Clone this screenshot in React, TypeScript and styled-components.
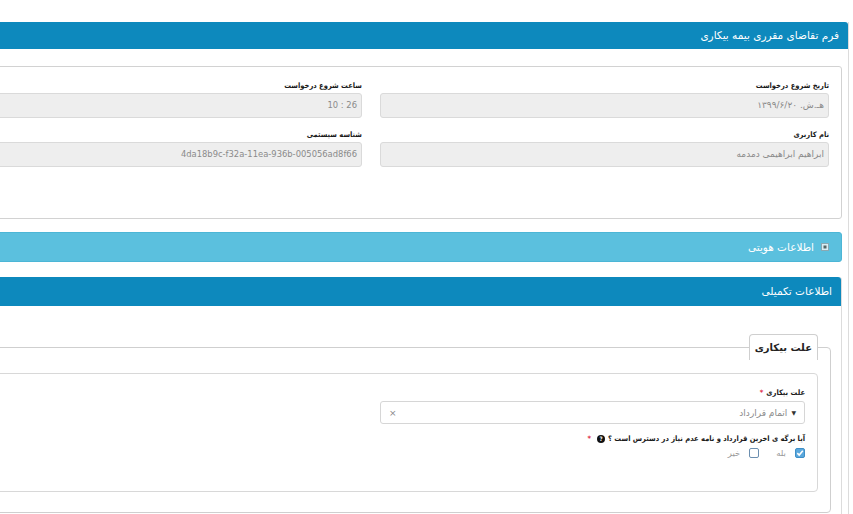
import React from "react";
import styled, { createGlobalStyle } from "styled-components";

const Global = createGlobalStyle`
  html, body { margin: 0; padding: 0; background: #fff; overflow: hidden; }
  body { font-family: "DejaVu Sans", "Noto Sans", sans-serif; color: #333; }
  * { box-sizing: border-box; }
`;

const Page = styled.div`
  direction: rtl;
  width: 956px;
  margin-left: -107px;
  padding-top: 22px;
`;

const MainPanel = styled.section`
  border: 1px solid #dcdcdc;
  border-top: none;
  min-height: 520px;
`;

const Heading = styled.div<{ $h: number }>`
  height: ${(p) => p.$h}px;
  line-height: ${(p) => p.$h}px;
  background: #0d89bd;
  color: #fff;
  font-size: 10.5px;
  padding: 0 9px;
  border-radius: 3px 3px 0 0;
`;

const PanelBody = styled.div`
  padding: 17px 6px 0;
`;

const Well = styled.div`
  border: 1px solid #d2d2d2;
  border-radius: 3px;
  padding: 12px 12px 51px;
  display: grid;
  grid-template-columns: 1fr 1fr;
  column-gap: 18px;
  row-gap: 10px;
`;

const Field = styled.div`
  display: flex;
  flex-direction: column;
`;

const Label = styled.label`
  display: block;
  height: 14px;
  line-height: 14px;
  font-family: "DejaVu Sans Condensed", "DejaVu Sans", sans-serif;
  font-size: 7.5px;
  font-weight: bold;
  color: #1a1a1a;
  white-space: nowrap;
`;

const Req = styled.span`
  color: #e0304a;
  margin-right: 3px;
`;

const ReadInput = styled.div<{ $ltr?: boolean }>`
  height: 25px;
  line-height: 23px;
  background: #eeeeee;
  border: 1px solid #dadada;
  border-radius: 3px;
  padding: 0 4px;
  font-size: ${(p) => (p.$ltr ? "8.4px" : "9px")};
  color: #8a8a8a;
  white-space: nowrap;
  overflow: hidden;
  direction: ${(p) => (p.$ltr ? "ltr" : "rtl")};
  text-align: right;
`;

const InfoBar = styled.div`
  margin-top: 13px;
  height: 30px;
  background: #5bc0de;
  border: 1px solid #4cb6d6;
  border-radius: 3px;
  display: flex;
  align-items: center;
  gap: 7px;
  padding: 0 12px;
  color: #fff;
  font-size: 10.5px;
`;

const SubPanel = styled.section`
  margin-top: 15px;
  border: 1px solid #dcdcdc;
  border-radius: 3px;
  border-top: none;
`;

const SubBody = styled.div`
  padding: 28px 10px 0;
  min-height: 230px;
`;

const FieldSet = styled.fieldset`
  margin: 0;
  padding: 0 12px 20px;
  border: 1px solid #cfcfcf;
  border-radius: 4px;
  min-width: 0;
`;

const Legend = styled.legend`
  height: 26px;
  line-height: 26px;
  padding: 0 5px;
  margin: 0;
  text-align: right;
  border: 1px solid #cfcfcf;
  border-bottom: none;
  border-radius: 4px 4px 0 0;
  background: #fff;
  font-size: 10px;
  font-weight: bold;
  color: #222;
  white-space: nowrap;
`;

const InnerBox = styled.div`
  margin-top: 13px;
  border: 1px solid #d8d8d8;
  border-radius: 4px;
  padding: 12px 12px 31px;
  display: grid;
  grid-template-columns: 1fr 1fr;
  column-gap: 18px;
`;

const SelectBox = styled.div`
  margin-top: 1px;
  height: 23px;
  border: 1px solid #d6d6d6;
  border-radius: 3px;
  display: flex;
  align-items: center;
  justify-content: space-between;
  padding: 0 8px 0 8px;
  font-size: 9px;
  color: #8a8a8a;
`;

const SelectValue = styled.span`
  display: flex;
  align-items: center;
  gap: 4px;
`;

const Caret = styled.span`
  color: #333;
  font-size: 6px;
`;

const Clear = styled.span`
  color: #888;
  font-size: 9px;
`;

const Question = styled.div`
  margin-top: 8px;
  height: 14px;
  line-height: 14px;
  font-family: "DejaVu Sans Condensed", "DejaVu Sans", sans-serif;
  font-size: 7.5px;
  font-weight: bold;
  color: #1a1a1a;
  white-space: nowrap;
  display: flex;
  align-items: center;
  gap: 3px;
`;

const HelpDot = styled.span`
  display: inline-flex;
  align-items: center;
  justify-content: center;
  width: 8px;
  height: 8px;
  border-radius: 50%;
  background: #111;
  color: #fff;
  font-size: 6px;
  line-height: 8px;
`;

const Choices = styled.div`
  display: flex;
  align-items: center;
  height: 14px;
  gap: 17px;
`;

const Choice = styled.label`
  display: flex;
  align-items: center;
  gap: 9px;
  font-size: 8.5px;
  color: #999;
`;

const Box = styled.span<{ $on?: boolean }>`
  display: inline-flex;
  width: 10px;
  height: 10px;
  border-radius: 2px;
  border: 1px solid ${(p) => (p.$on ? "#3f8fc7" : "#6c8fb0")};
  background: ${(p) => (p.$on ? "#5aa7dc" : "#fff")};
  align-items: center;
  justify-content: center;
`;

const PlusIcon = () => (
  <svg width="8" height="8" viewBox="0 0 8 8">
    <rect x="0.5" y="0.5" width="7" height="7" fill="#d9eef5" stroke="#8aa9b3" />
    <rect x="2.5" y="2.5" width="3" height="3" fill="#566" />
  </svg>
);

const Check = () => (
  <svg width="8" height="8" viewBox="0 0 8 8">
    <path d="M1.3 4.2 L3.2 6 L6.8 1.8" fill="none" stroke="#fff" strokeWidth="1.6" />
  </svg>
);

export default function App() {
  return (
    <>
      <Global />
      <Page>
        <MainPanel>
          <Heading $h={27}>فرم تقاضای مقرری بیمه بیکاری</Heading>
          <PanelBody>
            <Well>
              <Field>
                <Label>تاریخ شروع درخواست</Label>
                <ReadInput>هـ.ش. ۱۳۹۹/۶/۲۰</ReadInput>
              </Field>
              <Field>
                <Label>ساعت شروع درخواست</Label>
                <ReadInput $ltr>10 : 26</ReadInput>
              </Field>
              <Field>
                <Label>نام کاربری</Label>
                <ReadInput>ابراهیم ابراهیمی دمدمه</ReadInput>
              </Field>
              <Field>
                <Label>شناسه سیستمی</Label>
                <ReadInput $ltr>4da18b9c-f32a-11ea-936b-005056ad8f66</ReadInput>
              </Field>
            </Well>
            <InfoBar>
              <PlusIcon />
              <span>اطلاعات هویتی</span>
            </InfoBar>
            <SubPanel>
              <Heading $h={29}>اطلاعات تکمیلی</Heading>
              <SubBody>
                <FieldSet>
                  <Legend>علت بیکاری</Legend>
                  <InnerBox>
                    <Field>
                      <Label>
                        علت بیکاری<Req>*</Req>
                      </Label>
                      <SelectBox>
                        <SelectValue>
                          <Caret>▼</Caret>
                          <span>اتمام قرارداد</span>
                        </SelectValue>
                        <Clear>×</Clear>
                      </SelectBox>
                      <Question>
                        <span>آیا برگه ی اخرین قرارداد و نامه عدم نیاز در دسترس است ؟</span>
                        <HelpDot>?</HelpDot>
                        <Req>*</Req>
                      </Question>
                      <Choices>
                        <Choice>
                          <Box $on>
                            <Check />
                          </Box>
                          بله
                        </Choice>
                        <Choice>
                          <Box />
                          خیر
                        </Choice>
                      </Choices>
                    </Field>
                    <div />
                  </InnerBox>
                </FieldSet>
              </SubBody>
            </SubPanel>
          </PanelBody>
        </MainPanel>
      </Page>
    </>
  );
}
